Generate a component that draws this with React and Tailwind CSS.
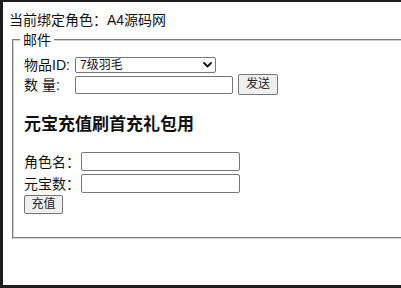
import React from "react";

function Chevron() {
  return (
    <svg width="9" height="6" viewBox="0 0 9 6" className="pointer-events-none absolute right-[4px] top-[5px]">
      <path d="M1 1 L4.5 4.5 L8 1" fill="none" stroke="#111" strokeWidth="1.8" strokeLinecap="round" strokeLinejoin="round" />
    </svg>
  );
}

export default function App() {
  return (
    <div className="w-[401px] h-[288px] bg-[#1c1c1c] pt-[2px] pl-[3px] pb-[3px] overflow-hidden">
      <div className="h-full bg-white overflow-hidden pl-[6px] text-[14px] text-[#111] font-['Liberation_Sans','Noto_Sans_CJK_SC',sans-serif]">
        <div className="mt-[8px] leading-[20px] whitespace-nowrap">当前绑定角色：A4源码网</div>
        <fieldset className="mt-[2px] ml-[3px] w-[430px] border-2 [border-style:groove] border-[#d0d0d0] pl-[10px] pt-0 pb-[23px]">
          <legend className="ml-[-4px] px-[3px] leading-[16px]">邮件</legend>
          <div className="mt-[8px] flex items-center h-[18px]">
            <span className="w-[51px] whitespace-nowrap leading-[18px]">物品ID:</span>
            <div className="relative">
              <select className="appearance-none block w-[141px] h-[16px] border border-[#767676] rounded-[2px] bg-white pl-[4px] text-[12px] leading-[14px] text-[#111]" defaultValue="7">
                <option value="7">7级羽毛</option>
              </select>
              <Chevron />
            </div>
          </div>
          <div className="flex items-center h-[21px]">
            <span className="w-[51px] whitespace-nowrap leading-[18px]">数 量:</span>
            <input className="block w-[158px] h-[18px] border border-[#767676] rounded-[2px] bg-white" />
            <button className="ml-[5px] w-[40px] h-[21px] border border-[#767676] rounded-[2px] bg-[#efefef] text-[12px] leading-[19px] text-[#222]">发送</button>
          </div>
          <h3 className="mt-[18px] text-[17px] font-bold leading-[24px] whitespace-nowrap">元宝充值刷首充礼包用</h3>
          <div className="mt-[15px] flex items-center h-[19px]">
            <span className="w-[57px] whitespace-nowrap leading-[18px]">角色名：</span>
            <input className="block w-[159px] h-[19px] border border-[#767676] rounded-[2px] bg-white" />
          </div>
          <div className="mt-[3px] flex items-center h-[19px]">
            <span className="w-[57px] whitespace-nowrap leading-[18px]">元宝数：</span>
            <input className="block w-[159px] h-[19px] border border-[#767676] rounded-[2px] bg-white" />
          </div>
          <button className="mt-[2px] block w-[39px] h-[19px] border border-[#767676] rounded-[2px] bg-[#efefef] text-[12px] leading-[17px] text-[#222]">充值</button>
        </fieldset>
      </div>
    </div>
  );
}
